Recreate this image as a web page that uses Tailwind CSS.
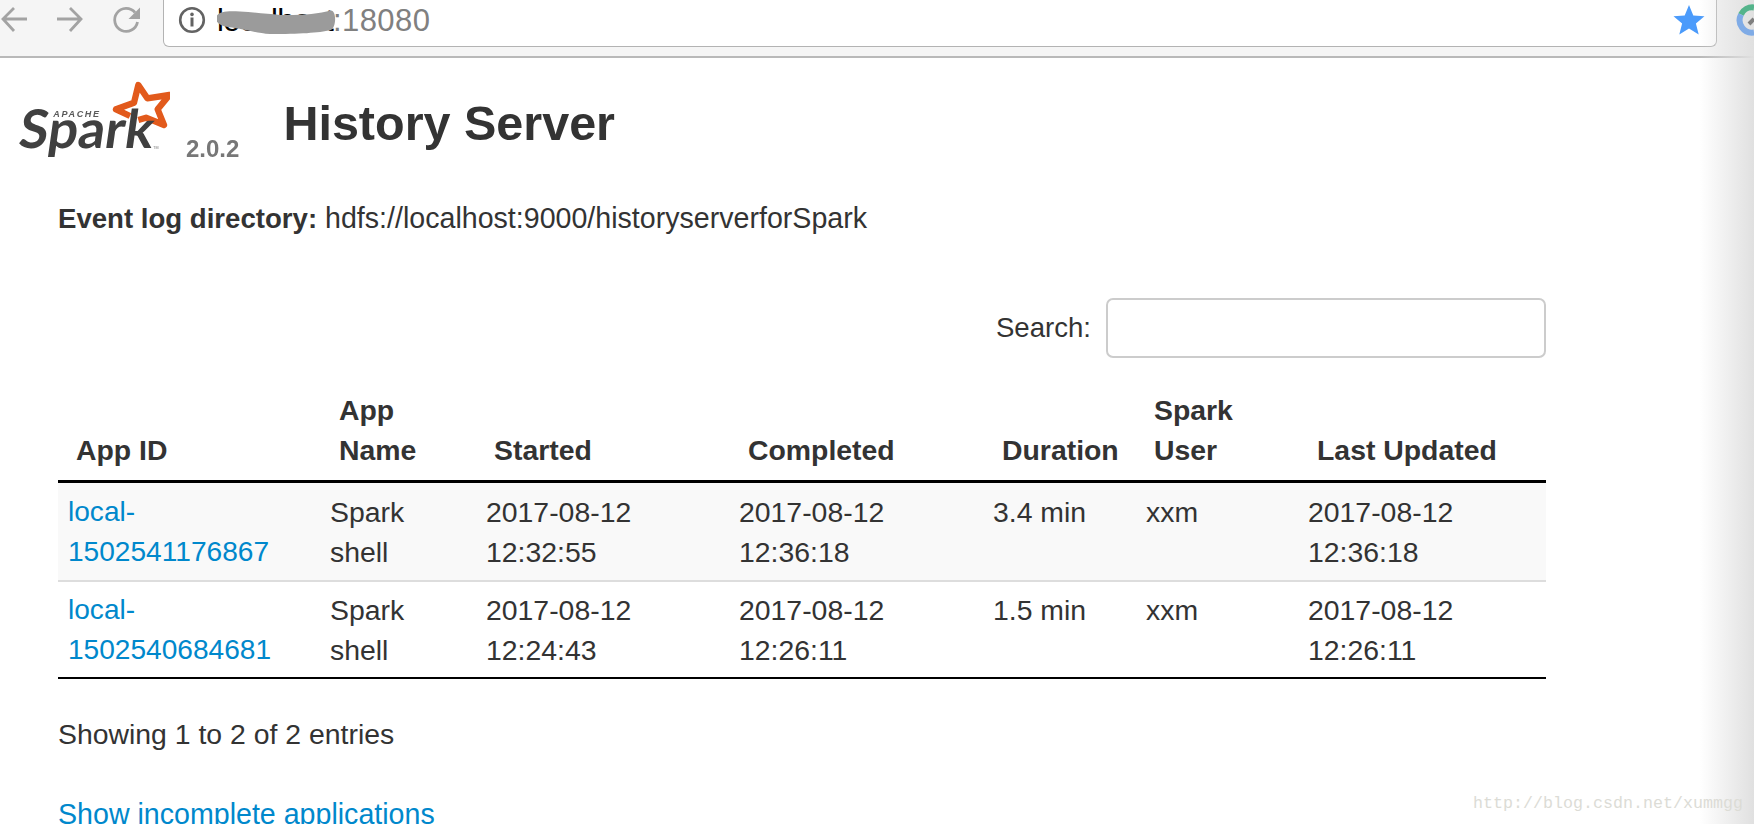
<!DOCTYPE html>
<html lang="en">
<head>
  <meta charset="UTF-8" />
  <title>History Server</title>
  <script src="https://cdn.jsdelivr.net/npm/@tailwindcss/browser@4"></script>
</head>
<body class="relative h-[824px] overflow-hidden bg-white font-['Liberation_Sans',Arial,sans-serif] text-[28.4px] leading-[40px] text-[#333]">

  <!-- browser toolbar -->
  <header class="flex h-[58px] items-start border-b-2 border-[#b9b9b9] bg-[#f5f5f5]">
    <svg class="h-[46px] w-[163px] shrink-0" viewBox="0 0 163 46" fill="none" stroke="#a3a3a3" stroke-width="2.8">
      <path d="M27 19H3M14 8 3 19l11 12"/>
      <path d="M57 19h24M70 8l11 11-11 12"/>
      <path d="M135 12.5A11.5 11.5 0 1 0 137.5 22"/>
      <path d="M140 7.5V19h-11.5z" fill="#a3a3a3" stroke="none"/>
    </svg>
    <div class="flex h-[47px] w-[1554px] shrink-0 items-start rounded-b-[6px] border-x border-b border-[#b3b3b3] bg-white">
      <svg class="ml-[14px] mt-[6px] h-[28px] w-[28px] shrink-0" viewBox="0 0 28 28" fill="none"><circle cx="14" cy="14" r="11.8" stroke="#636363" stroke-width="2.6"/><circle cx="14" cy="8.4" r="1.8" fill="#636363"/><path d="M14 11.5v9" stroke="#636363" stroke-width="3"/></svg>
      <div class="relative ml-[11px] mt-[3px] text-[31px] leading-[36px]">
        <span class="tracking-[-0.7px] text-black">localhost</span><span class="tracking-[0.4px] text-[#808080]">:18080</span>
        <svg class="absolute left-0 top-[-1px] h-[36px] w-[124px]" viewBox="217 2 124 36"><path d="M216 18C217 12 225 10.5 240 11.5C255 12.5 268 14 280 15C300 15.5 318 14 331 10.5C337 11 336 28 331 30C318 33 300 34 270 34C255 33 245 29 228 27C220 26 216 23 216 18z" fill="#9b9b9b"/></svg>
      </div>
      <svg class="ml-auto mr-[11px] mt-[4px] h-[32px] w-[32px] shrink-0" viewBox="0 0 32 32"><path d="M16 1l4.3 10.4 11.2.8-8.6 7.2 2.8 11L16 24.4 6.3 30.4l2.8-11L.5 12.2l11.2-.8z" fill="#4b9bfb"/></svg>
    </div>
  </header>

  <!-- page title -->
  <div class="flex h-[105px] items-start pl-[10px]">
    <svg class="mt-[12px] h-[100px] w-[160px] shrink-0 blur-[0.6px]" viewBox="0 0 480 300">
      <path d="M360 138 318 118l54-20 13-53 27 40 66-10-35 43 19 47-54-22-23 7" fill="none" stroke="#e25a1c" stroke-width="19" stroke-linejoin="round"/>
      <text x="130" y="140" font-size="27" font-weight="700" font-style="italic" letter-spacing="5" fill="#5a5a5a" font-family="Liberation Sans">APACHE</text>
      <text transform="translate(22 234) skewX(-8)" font-size="160" font-weight="700" textLength="402" lengthAdjust="spacingAndGlyphs" fill="#404040" font-family="Lato">Spark</text>
      <text x="430" y="238" font-size="11" fill="#777" font-family="Liberation Sans">TM</text>
    </svg>
    <span class="ml-[16px] mt-[76px] text-[24px] font-bold leading-[30px] text-[#777] blur-[0.3px]">2.0.2</span>
    <h1 class="ml-[44px] mt-[33px] text-[48.5px] font-bold leading-[64px]">History Server</h1>
  </div>

  <main class="w-[1546px] pl-[58px]">
    <p class="mt-[35px] text-[28.6px]"><strong class="text-[27.6px]">Event log directory:</strong> hdfs://localhost:9000/historyserverforSpark</p>

    <div class="mt-[59px] flex items-center justify-end gap-[15px]">
      <label for="search" class="text-[27.6px]">Search:</label>
      <input id="search" type="text" class="h-[60px] w-[440px] rounded-[7px] border-2 border-[#ccc] bg-white" />
    </div>

    <table class="mt-[32px] w-[1488px] table-fixed border-collapse">
      <colgroup>
        <col class="w-[261px]" /><col class="w-[156px]" /><col class="w-[253px]" /><col class="w-[254px]" />
        <col class="w-[153px]" /><col class="w-[162px]" /><col class="w-[249px]" />
      </colgroup>
      <thead>
        <tr class="border-b-[3px] border-black text-left align-bottom font-bold">
          <th class="pb-[10px] pl-[18px]">App ID</th>
          <th class="pb-[10px] pl-[20px]">App Name</th>
          <th class="pb-[10px] pl-[19px]">Started</th>
          <th class="pb-[10px] pl-[20px]">Completed</th>
          <th class="pb-[10px] pl-[20px] whitespace-nowrap">Duration</th>
          <th class="pb-[10px] pl-[19px]">Spark User</th>
          <th class="pb-[10px] pl-[20px]">Last Updated</th>
        </tr>
      </thead>
      <tbody>
        <tr class="border-t-[3px] border-b-2 border-t-[#ddd] border-b-[#ddd] bg-[#f9f9f9] align-top">
          <td class="pb-[8px] pl-[10px] pt-[9px] text-[28.1px]"><a href="#" class="text-[#0088cc]">local-<br />1502541176867</a></td>
          <td class="pb-[8px] pl-[11px] pt-[9px]">Spark<br />shell</td>
          <td class="pb-[8px] pl-[11px] pt-[9px]">2017-08-12<br />12:32:55</td>
          <td class="pb-[8px] pl-[11px] pt-[9px]">2017-08-12<br />12:36:18</td>
          <td class="pb-[8px] pl-[11px] pt-[9px]">3.4 min</td>
          <td class="pb-[8px] pl-[11px] pt-[9px]">xxm</td>
          <td class="pb-[8px] pl-[11px] pt-[9px]">2017-08-12<br />12:36:18</td>
        </tr>
        <tr class="border-b-[2px] border-black align-top">
          <td class="pb-[7px] pl-[10px] pt-[8px] text-[28.1px]"><a href="#" class="text-[#0088cc]">local-<br />1502540684681</a></td>
          <td class="pb-[7px] pl-[11px] pt-[8px]">Spark<br />shell</td>
          <td class="pb-[7px] pl-[11px] pt-[8px]">2017-08-12<br />12:24:43</td>
          <td class="pb-[7px] pl-[11px] pt-[8px]">2017-08-12<br />12:26:11</td>
          <td class="pb-[7px] pl-[11px] pt-[8px]">1.5 min</td>
          <td class="pb-[7px] pl-[11px] pt-[8px]">xxm</td>
          <td class="pb-[7px] pl-[11px] pt-[8px]">2017-08-12<br />12:26:11</td>
        </tr>
      </tbody>
    </table>

    <p class="mt-[35px]">Showing 1 to 2 of 2 entries</p>
    <p class="mt-[40px] text-[28.6px]"><a href="#" class="text-[#0088cc]">Show incomplete applications</a></p>
  </main>

  <!-- shadow on the right edge and blog watermark, both lie over the page -->
  <div class="pointer-events-none absolute bottom-0 right-0 top-0 w-[54px] bg-gradient-to-r from-white/0 to-[#e0e0e0]"></div>
  <svg class="absolute left-[1734px] top-[3px] h-[34px] w-[20px]" viewBox="0 0 20 34" fill="none">
    <path d="M7 11.5A12.5 12.5 0 0 1 20 4.5" stroke="#54b48b" stroke-width="6"/>
    <path d="M7 11.5A12.5 12.5 0 0 0 20 29.5" stroke="#7fabe6" stroke-width="6"/>
    <path d="M15 21l5-5" stroke="#7f7f7f" stroke-width="4"/>
  </svg>
  <span class="absolute left-[1473px] top-[792px] font-['Liberation_Mono',monospace] text-[16.67px] leading-[24px] text-[#dcdcd6]">http://blog.csdn.net/xummgg</span>
</body>
</html>
